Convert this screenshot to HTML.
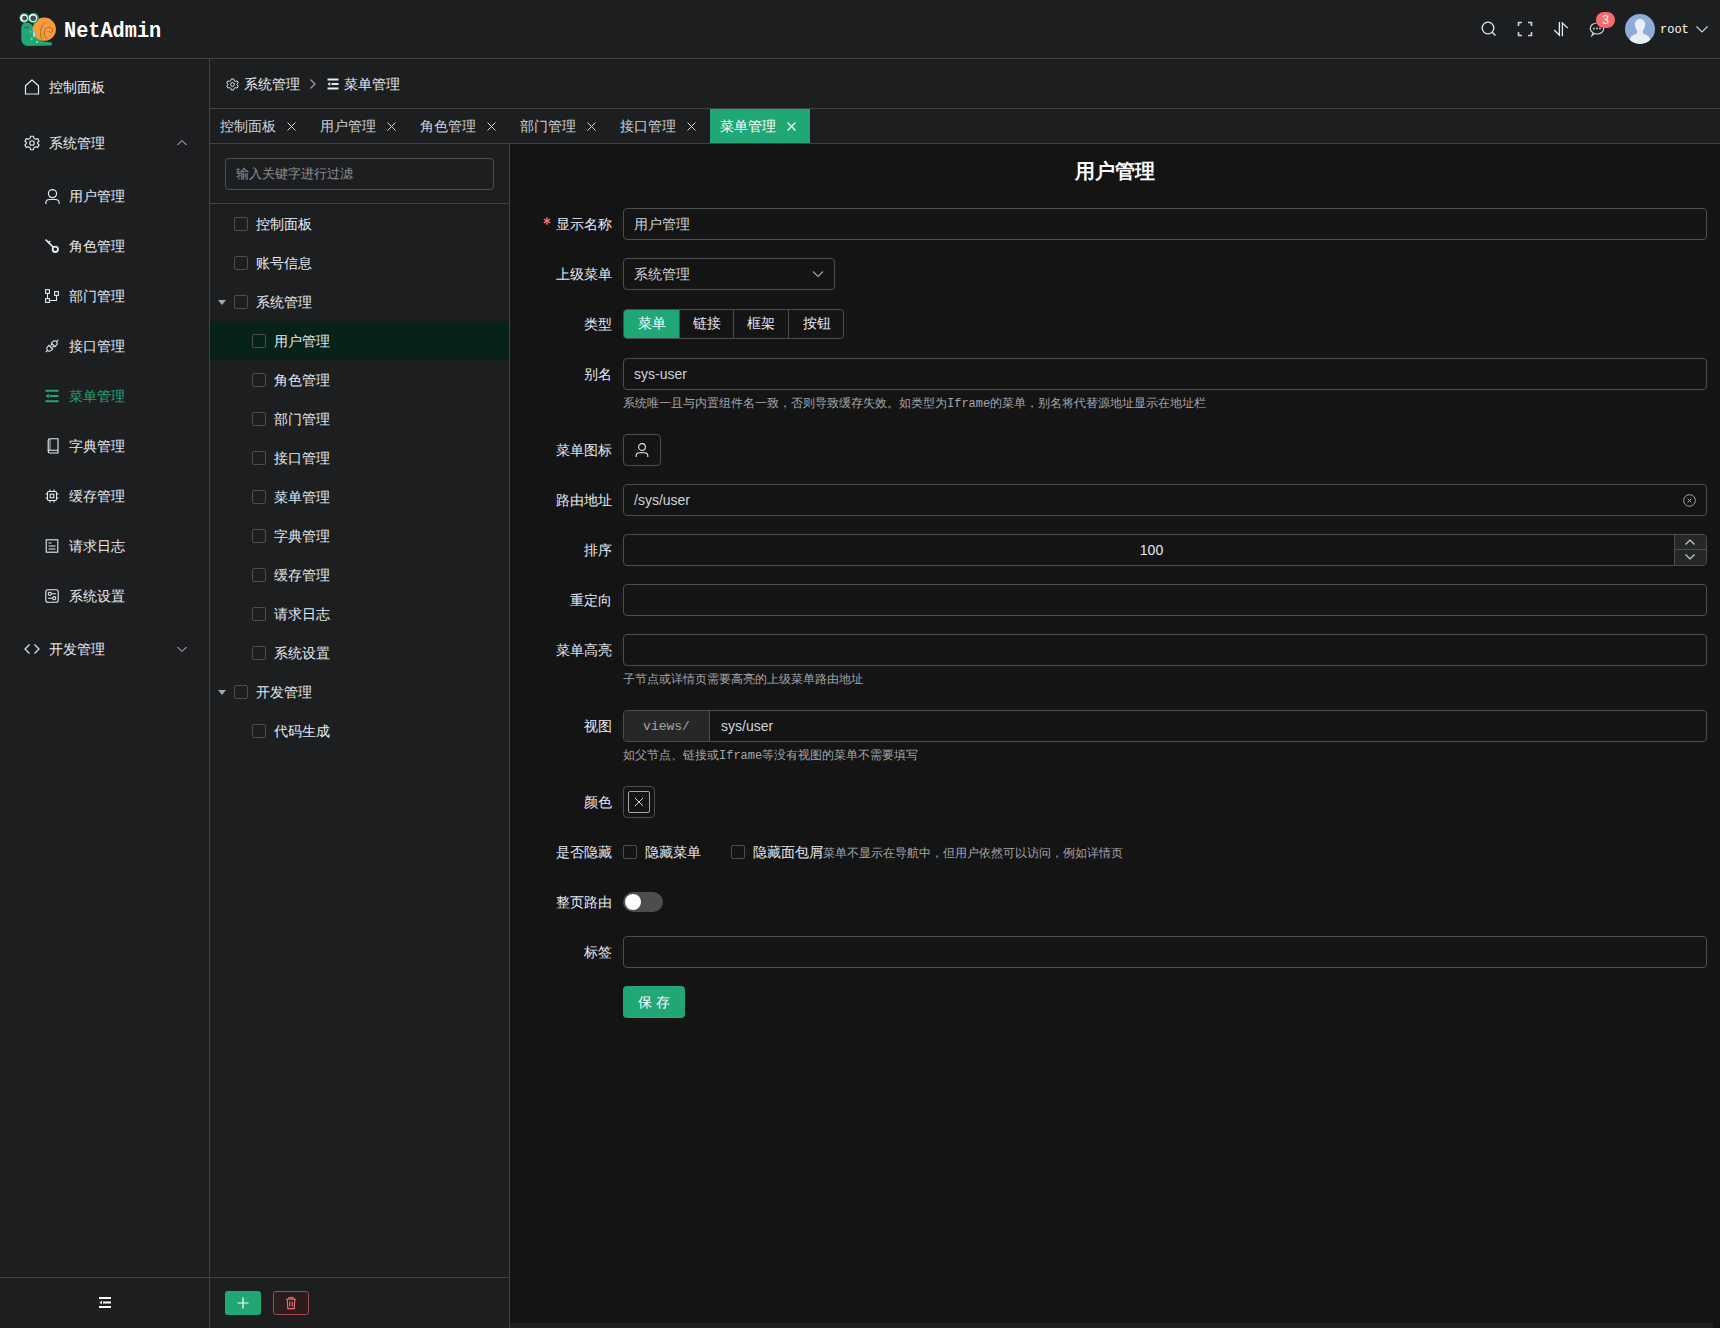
<!DOCTYPE html>
<html><head><meta charset="utf-8">
<style>
*{box-sizing:border-box;margin:0;padding:0}
html,body{width:1720px;height:1328px;overflow:hidden;background:#141414;font-family:"Liberation Sans",sans-serif;font-size:14px;color:#E5EAF3}
.abs{position:absolute}
svg{display:block}
#header{left:0;top:0;width:1720px;height:59px;background:#1d1e1f;border-bottom:1px solid #414243}
#side{left:0;top:59px;width:210px;height:1269px;background:#1d1e1f;border-right:1px solid #414243}
#crumb{left:210px;top:59px;width:1510px;height:50px;background:#1d1e1f;border-bottom:1px solid #414243}
#tabs{left:210px;top:109px;width:1510px;height:35px;background:#1d1e1f;border-bottom:1px solid #414243}
#tree{left:210px;top:144px;width:300px;height:1184px;background:#1d1e1f;border-right:1px solid #414243}
#form{left:510px;top:144px;width:1210px;height:1184px;background:#141414}
.mi{position:absolute;left:0;width:209px;height:56px;line-height:56px;color:#E5EAF3}
.mi .ic{position:absolute;left:24px;top:20px;width:16px;height:16px}
.mi .tx{position:absolute;left:49px;top:0}
.si{position:absolute;left:0;width:209px;height:50px;line-height:50px;color:#E5EAF3}
.si .ic{position:absolute;left:45px;top:18px;width:14px;height:14px}
.si .tx{position:absolute;left:69px;top:0}
.tab{position:absolute;top:0;height:34px;width:100px;line-height:34px;color:#CFD3DC}
.tab .tx{position:absolute;left:10px;top:0}
.tab .x{position:absolute;left:77px;top:13px;width:9px;height:9px}
.node{position:absolute;left:0;width:299px;height:39px;line-height:39px;color:#E5EAF3}
.cb{position:absolute;top:13px;width:14px;height:14px;border:1px solid #4C4D4F;border-radius:2px;background:transparent}
.node .tx{position:absolute;top:1px}
.lbl{position:absolute;left:0;width:102px;text-align:right;height:32px;line-height:32px;color:#E5EAF3;white-space:nowrap}
.mono{font-family:"Liberation Mono",monospace}
.inp{position:absolute;left:113px;height:32px;border:1px solid #4C4D4F;border-radius:4px;background:#141414;line-height:30px;padding-left:10px;color:#CFD3DC}
.help{position:absolute;left:113px;font-size:12px;color:#A3A6AD;line-height:20px;white-space:nowrap}
</style></head><body>
<div id="header" class="abs">
 <svg class="abs" style="left:16px;top:8px" width="44" height="44" viewBox="0 0 44 44">
  <path d="M5.3 21 C5.3 16.5 7.8 14.5 10.5 14.5 C13.5 14.5 15.5 16 16.5 17.5 L22 30 C24 33 27 33.5 30 33.8 L34.5 34.2 C36.8 34.6 36.6 37.1 34.5 37.4 L12.5 38 C8 38 5.5 35 5.3 31 Z" fill="#21a675"/>
  <circle cx="28.3" cy="21.2" r="11.6" fill="#f69c3c"/>
  <path d="M25.8 31.8 C23.6 26 24 18.5 29.5 13.8" fill="none" stroke="#a8682a" stroke-width="0.95"/>
  <path d="M31.5 30.5 C27.5 29.5 27 23 30.5 20.2 C33.5 18 37 19.8 36.6 22.8 C36.2 25 33.4 25.2 33.2 23.2" fill="none" stroke="#a8682a" stroke-width="1"/>
  <circle cx="8.3" cy="10" r="4.9" fill="#21a675"/><circle cx="17.6" cy="10" r="5.2" fill="#21a675"/>
  <circle cx="8" cy="10" r="3.8" fill="#fff"/><circle cx="16.9" cy="10" r="4.1" fill="#fff"/>
  <circle cx="8.6" cy="10.2" r="2.4" fill="#414b50"/><circle cx="17.2" cy="10.2" r="2.8" fill="#414b50"/>
  <path d="M8 18.6 Q10.5 21.6 13 18.6" fill="none" stroke="#2a3a36" stroke-width="0.7"/>
  <ellipse cx="14.5" cy="23.8" rx="0.8" ry="1.1" fill="#7fd3b0"/>
  <ellipse cx="18" cy="26.5" rx="1.1" ry="2.9" fill="#a6e3cc"/>
  <ellipse cx="15.7" cy="31" rx="0.9" ry="1.3" fill="#7fd3b0"/>
  <circle cx="21" cy="34" r="1.1" fill="#a6e3cc"/>
 </svg>
 <div class="abs" style="left:64px;top:17px;height:30px;line-height:30px;font-family:'Liberation Mono',monospace;font-weight:bold;font-size:22px;color:#fff;transform:scaleX(0.92);transform-origin:0 0">NetAdmin</div>
 <svg class="abs" style="left:1481px;top:21px" width="16" height="16" viewBox="0 0 16 16"><circle cx="7" cy="7" r="5.8" fill="none" stroke="#E5EAF3" stroke-width="1.3"/><path d="M11.2 11.2 L14.5 14.5" stroke="#E5EAF3" stroke-width="1.3"/></svg>
 <svg class="abs" style="left:1517px;top:21px" width="16" height="16" viewBox="0 0 16 16"><path d="M1.5 5 V1.5 H5 M11 1.5 H14.5 V5 M14.5 11 V14.5 H11 M5 14.5 H1.5 V11" fill="none" stroke="#CFD3DC" stroke-width="1.6"/></svg>
 <svg class="abs" style="left:1553px;top:21px" width="16" height="16" viewBox="0 0 16 16"><path d="M1.2 9 L6.4 14.2 V0.9 M9.4 15.2 V2 L14.8 7.1" fill="none" stroke="#E5EAF3" stroke-width="1.3"/></svg>
 <svg class="abs" style="left:1589px;top:21px" width="16" height="16" viewBox="0 0 16 16"><path d="M3 14.5 L4 11.5 C2 10.5 1.3 9 1.3 7.5 C1.3 4.2 4.3 2 8 2 C11.7 2 14.7 4.2 14.7 7.5 C14.7 10.8 11.7 13 8 13 C7 13 6 12.8 5.2 12.5 Z" fill="none" stroke="#CFD3DC" stroke-width="1.2"/><circle cx="5" cy="7.5" r="0.9" fill="#CFD3DC"/><circle cx="8" cy="7.5" r="0.9" fill="#CFD3DC"/><circle cx="11" cy="7.5" r="0.9" fill="#CFD3DC"/></svg>
 <div class="abs" style="left:1596px;top:12px;width:19px;height:16px;border-radius:8px;background:#f56c6c;color:#fff;font-size:12px;line-height:16px;text-align:center">3</div>
 <svg class="abs" style="left:1625px;top:14px" width="30" height="30" viewBox="0 0 30 30"><defs><clipPath id="av"><circle cx="15" cy="15" r="15"/></clipPath></defs><circle cx="15" cy="15" r="15" fill="#8fabd9"/><g clip-path="url(#av)" fill="#e9eef8"><ellipse cx="15" cy="11" rx="5.2" ry="6.3"/><path d="M4 30 C4 22 9 19.5 15 19.5 C21 19.5 26 22 26 30 Z"/><rect x="12" y="15" width="6" height="6"/></g></svg>
 <div class="abs" style="left:1660px;top:15px;height:30px;line-height:30px;font-family:'Liberation Mono',monospace;font-size:12px;color:#fff">root</div>
 <svg class="abs" style="left:1695px;top:23px" width="14" height="12" viewBox="0 0 14 12"><path d="M1.5 3.5 L7 9 L12.5 3.5" fill="none" stroke="#CFD3DC" stroke-width="1.2"/></svg>
</div>
<div id="side" class="abs">
 <div class="mi" style="top:0">
  <svg class="ic" viewBox="0 0 16 16" style="left:24px;top:20px"><path d="M1.5 6.8 L8 1 L14.5 6.8 V15 H1.5 Z" fill="none" stroke="#E5EAF3" stroke-width="1.2" stroke-linejoin="round"/></svg>
  <span class="tx">控制面板</span></div>
 <div class="mi" style="top:56px">
  <svg class="ic" viewBox="0 0 16 16" style="left:24px;top:20px"><path d="M6.6 1.2 H9.4 L9.9 3.2 L11.7 4.2 L13.7 3.6 L15.1 6 L13.6 7.5 V8.5 L15.1 10 L13.7 12.4 L11.7 11.8 L9.9 12.8 L9.4 14.8 H6.6 L6.1 12.8 L4.3 11.8 L2.3 12.4 L0.9 10 L2.4 8.5 V7.5 L0.9 6 L2.3 3.6 L4.3 4.2 L6.1 3.2 Z" fill="none" stroke="#E5EAF3" stroke-width="1.1" stroke-linejoin="round"/><circle cx="8" cy="8" r="2.3" fill="none" stroke="#E5EAF3" stroke-width="1.1"/></svg>
  <span class="tx">系统管理</span>
  <svg class="abs" style="left:176px;top:23px" width="12" height="10" viewBox="0 0 12 10"><path d="M1.5 7 L6 2.5 L10.5 7" fill="none" stroke="#CFD3DC" stroke-width="1"/></svg></div>
 <div class="si" style="top:112px">
  <svg class="ic" viewBox="0 0 14 14" style="width:15px;height:15px;top:18px"><circle cx="7" cy="4.3" r="3.8" fill="none" stroke="#E5EAF3" stroke-width="1.1"/><path d="M0.8 14.2 V12.8 C0.8 10.8 2.2 9.8 4.2 9.8 H9.8 C11.8 9.8 13.2 10.8 13.2 12.8 V14.2" fill="none" stroke="#E5EAF3" stroke-width="1.1"/></svg>
  <span class="tx">用户管理</span></div>
 <div class="si" style="top:162px">
  <svg class="ic" viewBox="0 0 14 14"><path d="M0.6 0.6 L8.4 8.4 M3.6 3.6 L5.2 2" fill="none" stroke="#E5EAF3" stroke-width="1.5"/><circle cx="10.3" cy="10.3" r="2.7" fill="none" stroke="#E5EAF3" stroke-width="1.8"/></svg>
  <span class="tx">角色管理</span></div>
 <div class="si" style="top:212px">
  <svg class="ic" viewBox="0 0 14 14"><rect x="0.6" y="0.6" width="3.8" height="3.8" fill="none" stroke="#E5EAF3" stroke-width="1.1"/><rect x="0.6" y="9.6" width="3.8" height="3.8" fill="none" stroke="#E5EAF3" stroke-width="1.1"/><rect x="9.6" y="2.6" width="3.8" height="3.8" fill="none" stroke="#E5EAF3" stroke-width="1.1"/><path d="M2.5 4.4 V9.6 M4.4 11.5 H11.5 V6.4" fill="none" stroke="#E5EAF3" stroke-width="1.1"/></svg>
  <span class="tx">部门管理</span></div>
 <div class="si" style="top:262px">
  <svg class="ic" viewBox="0 0 14 14"><path d="M0.8 13.2 L2.6 11.4 M11.4 2.6 L13.2 0.8 M5.6 6.6 L7 5.2 M7.4 8.4 L8.8 7" fill="none" stroke="#E5EAF3" stroke-width="1.1"/><path d="M2.6 11.4 C1.4 10.2 1.6 8.8 2.8 7.6 L4 6.4 L7.6 10 L6.4 11.2 C5.2 12.4 3.8 12.6 2.6 11.4 Z M11.4 2.6 C12.6 3.8 12.4 5.2 11.2 6.4 L10 7.6 L6.4 4 L7.6 2.8 C8.8 1.6 10.2 1.4 11.4 2.6 Z" fill="none" stroke="#E5EAF3" stroke-width="1.1"/></svg>
  <span class="tx">接口管理</span></div>
 <div class="si" style="top:312px;color:#21a675">
  <svg class="ic" viewBox="0 0 14 14"><path d="M0.5 1.8 H13.5 M4.5 7 H13.5 M0.5 12.2 H13.5" stroke="#21a675" stroke-width="2"/><path d="M0.6 7 L3.8 4.6 V9.4 Z" fill="#21a675"/></svg>
  <span class="tx">菜单管理</span></div>
 <div class="si" style="top:362px">
  <svg class="ic" viewBox="0 0 12 16" style="left:47px;top:17px;width:12px;height:16px"><path d="M3 0.8 H11 V15 H2.8 C1.8 15 1.2 14.4 1.2 13.5 V2.6 C1.2 1.6 1.9 0.8 3 0.8 Z M1.3 13.4 C1.3 12.6 1.9 12.2 2.8 12.2 H11" fill="none" stroke="#E5EAF3" stroke-width="1.1"/><path d="M3 1 V12" stroke="#E5EAF3" stroke-width="0.8"/></svg>
  <span class="tx">字典管理</span></div>
 <div class="si" style="top:412px">
  <svg class="ic" viewBox="0 0 14 14"><rect x="2.5" y="2.5" width="9" height="9" rx="1.2" fill="none" stroke="#E5EAF3" stroke-width="1.1"/><rect x="5.2" y="5.2" width="3.6" height="3.6" fill="none" stroke="#E5EAF3" stroke-width="1.1"/><path d="M5 0.5 V2.5 M9 0.5 V2.5 M5 11.5 V13.5 M9 11.5 V13.5 M0.5 5 H2.5 M0.5 9 H2.5 M11.5 5 H13.5 M11.5 9 H13.5" stroke="#E5EAF3" stroke-width="1.1"/></svg>
  <span class="tx">缓存管理</span></div>
 <div class="si" style="top:462px">
  <svg class="ic" viewBox="0 0 14 14"><rect x="1.2" y="0.8" width="11.6" height="12.4" fill="none" stroke="#E5EAF3" stroke-width="1.1"/><path d="M3.5 4 H6.5 M3.5 7 H10.5 M3.5 10 H10.5" stroke="#E5EAF3" stroke-width="1.1"/></svg>
  <span class="tx">请求日志</span></div>
 <div class="si" style="top:512px">
  <svg class="ic" viewBox="0 0 14 14"><rect x="0.8" y="0.8" width="12.4" height="12.4" rx="2" fill="none" stroke="#E5EAF3" stroke-width="1.1"/><circle cx="4.8" cy="4.8" r="1.6" fill="none" stroke="#E5EAF3" stroke-width="1.1"/><circle cx="9.2" cy="9.2" r="1.6" fill="none" stroke="#E5EAF3" stroke-width="1.1"/><path d="M6.4 4.8 H11 M3 9.2 H7.6" stroke="#E5EAF3" stroke-width="1.1"/></svg>
  <span class="tx">系统设置</span></div>
 <div class="mi" style="top:562px">
  <svg class="ic" viewBox="0 0 16 16" style="left:24px;top:20px"><path d="M5.5 3.5 L1 8 L5.5 12.5 M10.5 3.5 L15 8 L10.5 12.5" fill="none" stroke="#E5EAF3" stroke-width="1.2"/></svg>
  <span class="tx">开发管理</span>
  <svg class="abs" style="left:176px;top:23px" width="12" height="10" viewBox="0 0 12 10"><path d="M1.5 3 L6 7.5 L10.5 3" fill="none" stroke="#CFD3DC" stroke-width="1"/></svg></div>
 <div class="abs" style="left:0;top:1218px;width:209px;height:1px;background:#414243"></div>
 <svg class="abs" style="left:99px;top:1238px" width="12" height="11" viewBox="0 0 12 11"><path d="M0 1 H12 M4 5.5 H12 M0 10 H12" stroke="#fff" stroke-width="1.8"/><path d="M0.5 5.5 L3 3.5 V7.5 Z" fill="#fff"/></svg>
</div>
<div id="crumb" class="abs">
 <svg class="abs" style="left:16px;top:19px" width="13" height="13" viewBox="0 0 16 16"><path d="M6.6 1.2 H9.4 L9.9 3.2 L11.7 4.2 L13.7 3.6 L15.1 6 L13.6 7.5 V8.5 L15.1 10 L13.7 12.4 L11.7 11.8 L9.9 12.8 L9.4 14.8 H6.6 L6.1 12.8 L4.3 11.8 L2.3 12.4 L0.9 10 L2.4 8.5 V7.5 L0.9 6 L2.3 3.6 L4.3 4.2 L6.1 3.2 Z" fill="none" stroke="#E5EAF3" stroke-width="1.2" stroke-linejoin="round"/><circle cx="8" cy="8" r="2.3" fill="none" stroke="#E5EAF3" stroke-width="1.2"/></svg>
 <span class="abs" style="left:34px;top:0;line-height:50px;color:#E5EAF3">系统管理</span>
 <svg class="abs" style="left:99px;top:19px" width="8" height="12" viewBox="0 0 8 12"><path d="M1.5 1.5 L6 6 L1.5 10.5" fill="none" stroke="#A3A6AD" stroke-width="1.1"/></svg>
 <svg class="abs" style="left:117px;top:19px" width="12" height="12" viewBox="0 0 12 12"><path d="M0.5 1.5 H11.5 M4.5 6 H11.5 M0.5 10.5 H11.5" stroke="#E5EAF3" stroke-width="2"/><path d="M0.5 6 L3.2 4 V8 Z" fill="#E5EAF3"/></svg>
 <span class="abs" style="left:134px;top:0;line-height:50px;color:#E5EAF3">菜单管理</span>
</div>
<div id="tabs" class="abs">
 <div class="tab" style="left:0px;"><span class="tx">控制面板</span><svg class="x" viewBox="0 0 9 9"><path d="M0.5 0.5 L8.5 8.5 M8.5 0.5 L0.5 8.5" stroke="#CFD3DC" stroke-width="1"/></svg></div>
 <div class="tab" style="left:100px;"><span class="tx">用户管理</span><svg class="x" viewBox="0 0 9 9"><path d="M0.5 0.5 L8.5 8.5 M8.5 0.5 L0.5 8.5" stroke="#CFD3DC" stroke-width="1"/></svg></div>
 <div class="tab" style="left:200px;"><span class="tx">角色管理</span><svg class="x" viewBox="0 0 9 9"><path d="M0.5 0.5 L8.5 8.5 M8.5 0.5 L0.5 8.5" stroke="#CFD3DC" stroke-width="1"/></svg></div>
 <div class="tab" style="left:300px;"><span class="tx">部门管理</span><svg class="x" viewBox="0 0 9 9"><path d="M0.5 0.5 L8.5 8.5 M8.5 0.5 L0.5 8.5" stroke="#CFD3DC" stroke-width="1"/></svg></div>
 <div class="tab" style="left:400px;"><span class="tx">接口管理</span><svg class="x" viewBox="0 0 9 9"><path d="M0.5 0.5 L8.5 8.5 M8.5 0.5 L0.5 8.5" stroke="#CFD3DC" stroke-width="1"/></svg></div>
 <div class="tab" style="left:500px;background:#21a675;color:#fff;"><span class="tx">菜单管理</span><svg class="x" viewBox="0 0 9 9"><path d="M0.5 0.5 L8.5 8.5 M8.5 0.5 L0.5 8.5" stroke="#fff" stroke-width="1.1"/></svg></div>
</div>
<div id="tree" class="abs">
 <div class="abs" style="left:15px;top:14px;width:269px;height:32px;border:1px solid #4C4D4F;border-radius:4px;background:#1d1e1f;line-height:30px;padding-left:10px;color:#8D9095;font-size:13px">输入关键字进行过滤</div>
 <div class="abs" style="left:0;top:59px;width:299px;height:1px;background:#414243"></div>
 <div class="node" style="top:60px;"><span class="cb" style="left:24px"></span><span class="tx" style="left:46px">控制面板</span></div>
 <div class="node" style="top:99px;"><span class="cb" style="left:24px"></span><span class="tx" style="left:46px">账号信息</span></div>
 <div class="node" style="top:138px;"><svg class="abs" style="left:8px;top:18px" width="8" height="5" viewBox="0 0 8 5"><path d="M0 0 H8 L4 5 Z" fill="#A3A6AD"/></svg><span class="cb" style="left:24px"></span><span class="tx" style="left:46px">系统管理</span></div>
 <div class="node" style="top:177px;background:#062219;"><span class="cb" style="left:42px"></span><span class="tx" style="left:64px">用户管理</span></div>
 <div class="node" style="top:216px;"><span class="cb" style="left:42px"></span><span class="tx" style="left:64px">角色管理</span></div>
 <div class="node" style="top:255px;"><span class="cb" style="left:42px"></span><span class="tx" style="left:64px">部门管理</span></div>
 <div class="node" style="top:294px;"><span class="cb" style="left:42px"></span><span class="tx" style="left:64px">接口管理</span></div>
 <div class="node" style="top:333px;"><span class="cb" style="left:42px"></span><span class="tx" style="left:64px">菜单管理</span></div>
 <div class="node" style="top:372px;"><span class="cb" style="left:42px"></span><span class="tx" style="left:64px">字典管理</span></div>
 <div class="node" style="top:411px;"><span class="cb" style="left:42px"></span><span class="tx" style="left:64px">缓存管理</span></div>
 <div class="node" style="top:450px;"><span class="cb" style="left:42px"></span><span class="tx" style="left:64px">请求日志</span></div>
 <div class="node" style="top:489px;"><span class="cb" style="left:42px"></span><span class="tx" style="left:64px">系统设置</span></div>
 <div class="node" style="top:528px;"><svg class="abs" style="left:8px;top:18px" width="8" height="5" viewBox="0 0 8 5"><path d="M0 0 H8 L4 5 Z" fill="#A3A6AD"/></svg><span class="cb" style="left:24px"></span><span class="tx" style="left:46px">开发管理</span></div>
 <div class="node" style="top:567px;"><span class="cb" style="left:42px"></span><span class="tx" style="left:64px">代码生成</span></div>
 <div class="abs" style="left:0;top:1133px;width:299px;height:1px;background:#414243"></div>
 <div class="abs" style="left:15px;top:1147px;width:36px;height:24px;border-radius:3px;background:#21a675"><svg class="abs" style="left:11px;top:5px" width="14" height="14" viewBox="0 0 14 14"><path d="M7 1.5 V12.5 M1.5 7 H12.5" stroke="#fff" stroke-width="1.2"/></svg></div>
 <div class="abs" style="left:63px;top:1147px;width:36px;height:24px;border-radius:3px;background:#2b1d1d;border:1px solid #a34a4a"><svg class="abs" style="left:10px;top:4px" width="14" height="14" viewBox="0 0 14 14"><path d="M2 3.2 H12 M5 3 V1.6 H9 V3 M3.2 3.2 L3.8 12.6 H10.2 L10.8 3.2 M5.8 5.5 V10.5 M8.2 5.5 V10.5" fill="none" stroke="#f56c6c" stroke-width="1.1"/></svg></div>
</div>
<div id="form" class="abs">
<div class="abs" style="left:0;top:0;width:1210px;height:52px;line-height:52px;text-align:center;font-size:20px;font-weight:bold;color:#fff;padding-top:1px">用户管理</div>
<div class="lbl" style="top:64px">显示名称</div><svg class="abs" style="left:33px;top:73px" width="8" height="8" viewBox="0 0 8 8"><path d="M4 0.3 V7.7 M0.8 2.15 L7.2 5.85 M0.8 5.85 L7.2 2.15" stroke="#f56c6c" stroke-width="1.4"/></svg>
<div class="inp" style="top:64px;width:1084px">用户管理</div>
<div class="lbl" style="top:114px">上级菜单</div>
<div class="inp" style="top:114px;width:212px">系统管理<svg class="abs" style="left:188px;top:11px" width="12" height="8" viewBox="0 0 12 8"><path d="M1 1.5 L6 6.5 L11 1.5" fill="none" stroke="#A3A6AD" stroke-width="1.1"/></svg></div>
<div class="lbl" style="top:164px">类型</div>
<div class="abs" style="left:113px;top:165px;width:221px;height:30px;border:1px solid #4C4D4F;border-radius:4px;overflow:hidden">
 <div class="abs" style="left:-1px;top:-1px;width:57px;height:30px;background:#21a675;color:#fff;text-align:center;line-height:29px;border-radius:4px 0 0 4px">菜单</div>
 <div class="abs" style="left:55px;top:-1px;width:1px;height:30px;background:#4C4D4F"></div>
 <div class="abs" style="left:56px;top:0;width:53px;line-height:27px;text-align:center;color:#E5EAF3">链接</div>
 <div class="abs" style="left:109px;top:0;width:1px;height:28px;background:#4C4D4F"></div>
 <div class="abs" style="left:110px;top:0;width:54px;line-height:27px;text-align:center;color:#E5EAF3">框架</div>
 <div class="abs" style="left:164px;top:0;width:1px;height:28px;background:#4C4D4F"></div>
 <div class="abs" style="left:165px;top:0;width:55px;line-height:27px;text-align:center;color:#E5EAF3">按钮</div>
</div>
<div class="lbl" style="top:214px">别名</div>
<div class="inp" style="top:214px;width:1084px">sys-user</div>
<div class="help" style="top:249px">系统唯一且与内置组件名一致，否则导致缓存失效。如类型为<span class="mono">Iframe</span>的菜单，别名将代替源地址显示在地址栏</div>
<div class="lbl" style="top:290px">菜单图标</div>
<div class="abs" style="left:113px;top:290px;width:38px;height:32px;border:1px solid #4C4D4F;border-radius:4px"><svg class="abs" style="left:11px;top:8px" width="14" height="14" viewBox="0 0 14 14"><circle cx="7" cy="4" r="3.4" fill="none" stroke="#E5EAF3" stroke-width="1.1"/><path d="M1.2 14 V12.6 C1.2 10.7 2.6 9.7 4.6 9.7 H9.4 C11.4 9.7 12.8 10.7 12.8 12.6 V14" fill="none" stroke="#E5EAF3" stroke-width="1.1"/></svg></div>
<div class="lbl" style="top:340px">路由地址</div>
<div class="inp" style="top:340px;width:1084px">/sys/user<svg class="abs" style="left:1059px;top:9px" width="13" height="13" viewBox="0 0 13 13"><circle cx="6.5" cy="6.5" r="5.8" fill="none" stroke="#A3A6AD" stroke-width="1"/><path d="M4.6 4.6 L8.4 8.4 M8.4 4.6 L4.6 8.4" stroke="#A3A6AD" stroke-width="1"/></svg></div>
<div class="lbl" style="top:390px">排序</div>
<div class="inp" style="top:390px;width:1084px;padding:0;text-align:center;padding-left:15px;padding-right:42px;color:#E5EAF3">100
 <div class="abs" style="right:0;top:0;width:32px;height:30px;background:#262727;border-left:1px solid #4C4D4F;border-radius:0 3px 3px 0">
  <div class="abs" style="left:0;top:14px;width:31px;height:1px;background:#4C4D4F"></div>
  <svg class="abs" style="left:9px;top:3px" width="12" height="8" viewBox="0 0 12 8"><path d="M1.5 6.5 L6 2 L10.5 6.5" fill="none" stroke="#CFD3DC" stroke-width="1.1"/></svg>
  <svg class="abs" style="left:9px;top:18px" width="12" height="8" viewBox="0 0 12 8"><path d="M1.5 1.5 L6 6 L10.5 1.5" fill="none" stroke="#CFD3DC" stroke-width="1.1"/></svg>
 </div></div>
<div class="lbl" style="top:440px">重定向</div>
<div class="inp" style="top:440px;width:1084px"></div>
<div class="lbl" style="top:490px">菜单高亮</div>
<div class="inp" style="top:490px;width:1084px"></div>
<div class="help" style="top:525px">子节点或详情页需要高亮的上级菜单路由地址</div>
<div class="lbl" style="top:566px">视图</div>
<div class="inp" style="top:566px;width:1084px;padding-left:0">
 <div class="abs" style="left:0;top:0;width:86px;height:30px;background:#262727;border-right:1px solid #4C4D4F;border-radius:3px 0 0 3px;text-align:center;font-family:'Liberation Mono',monospace;font-size:13px;color:#A3A6AD;line-height:32px">views/</div>
 <span class="abs" style="left:97px;top:0">sys/user</span></div>
<div class="help" style="top:601px">如父节点、链接或<span class="mono">Iframe</span>等没有视图的菜单不需要填写</div>
<div class="lbl" style="top:642px">颜色</div>
<div class="abs" style="left:113px;top:642px;width:32px;height:32px;border:1px solid #4C4D4F;border-radius:4px"><div class="abs" style="left:4px;top:4px;width:22px;height:22px;border:1px solid #A3A6AD;border-radius:2px"><svg class="abs" style="left:5px;top:5px" width="10" height="10" viewBox="0 0 10 10"><path d="M1 1 L9 9 M9 1 L1 9" stroke="#CFD3DC" stroke-width="1"/></svg></div></div>
<div class="lbl" style="top:692px">是否隐藏</div>
<span class="cb" style="left:113px;top:701px"></span><span class="abs" style="left:135px;top:692px;line-height:32px;color:#E5EAF3">隐藏菜单</span>
<span class="cb" style="left:221px;top:701px"></span><span class="abs" style="left:243px;top:692px;line-height:32px;color:#E5EAF3;white-space:nowrap">隐藏面包屑<span style="font-size:12px;color:#A3A6AD">菜单不显示在导航中，但用户依然可以访问，例如详情页</span></span>
<div class="lbl" style="top:742px">整页路由</div>
<div class="abs" style="left:113px;top:748px;width:40px;height:20px;border-radius:10px;background:#4C4D4F"><div class="abs" style="left:2px;top:2px;width:16px;height:16px;border-radius:8px;background:#fff"></div></div>
<div class="lbl" style="top:792px">标签</div>
<div class="inp" style="top:792px;width:1084px"></div>
<div class="abs" style="left:113px;top:842px;width:62px;height:32px;border-radius:4px;background:#21a675;color:#fff;text-align:center;line-height:32px;letter-spacing:4px;padding-left:4px">保存</div>
<div class="abs" style="left:0;top:1179px;width:1203px;height:5px;background:#202020"></div>
</div>
</body></html>
